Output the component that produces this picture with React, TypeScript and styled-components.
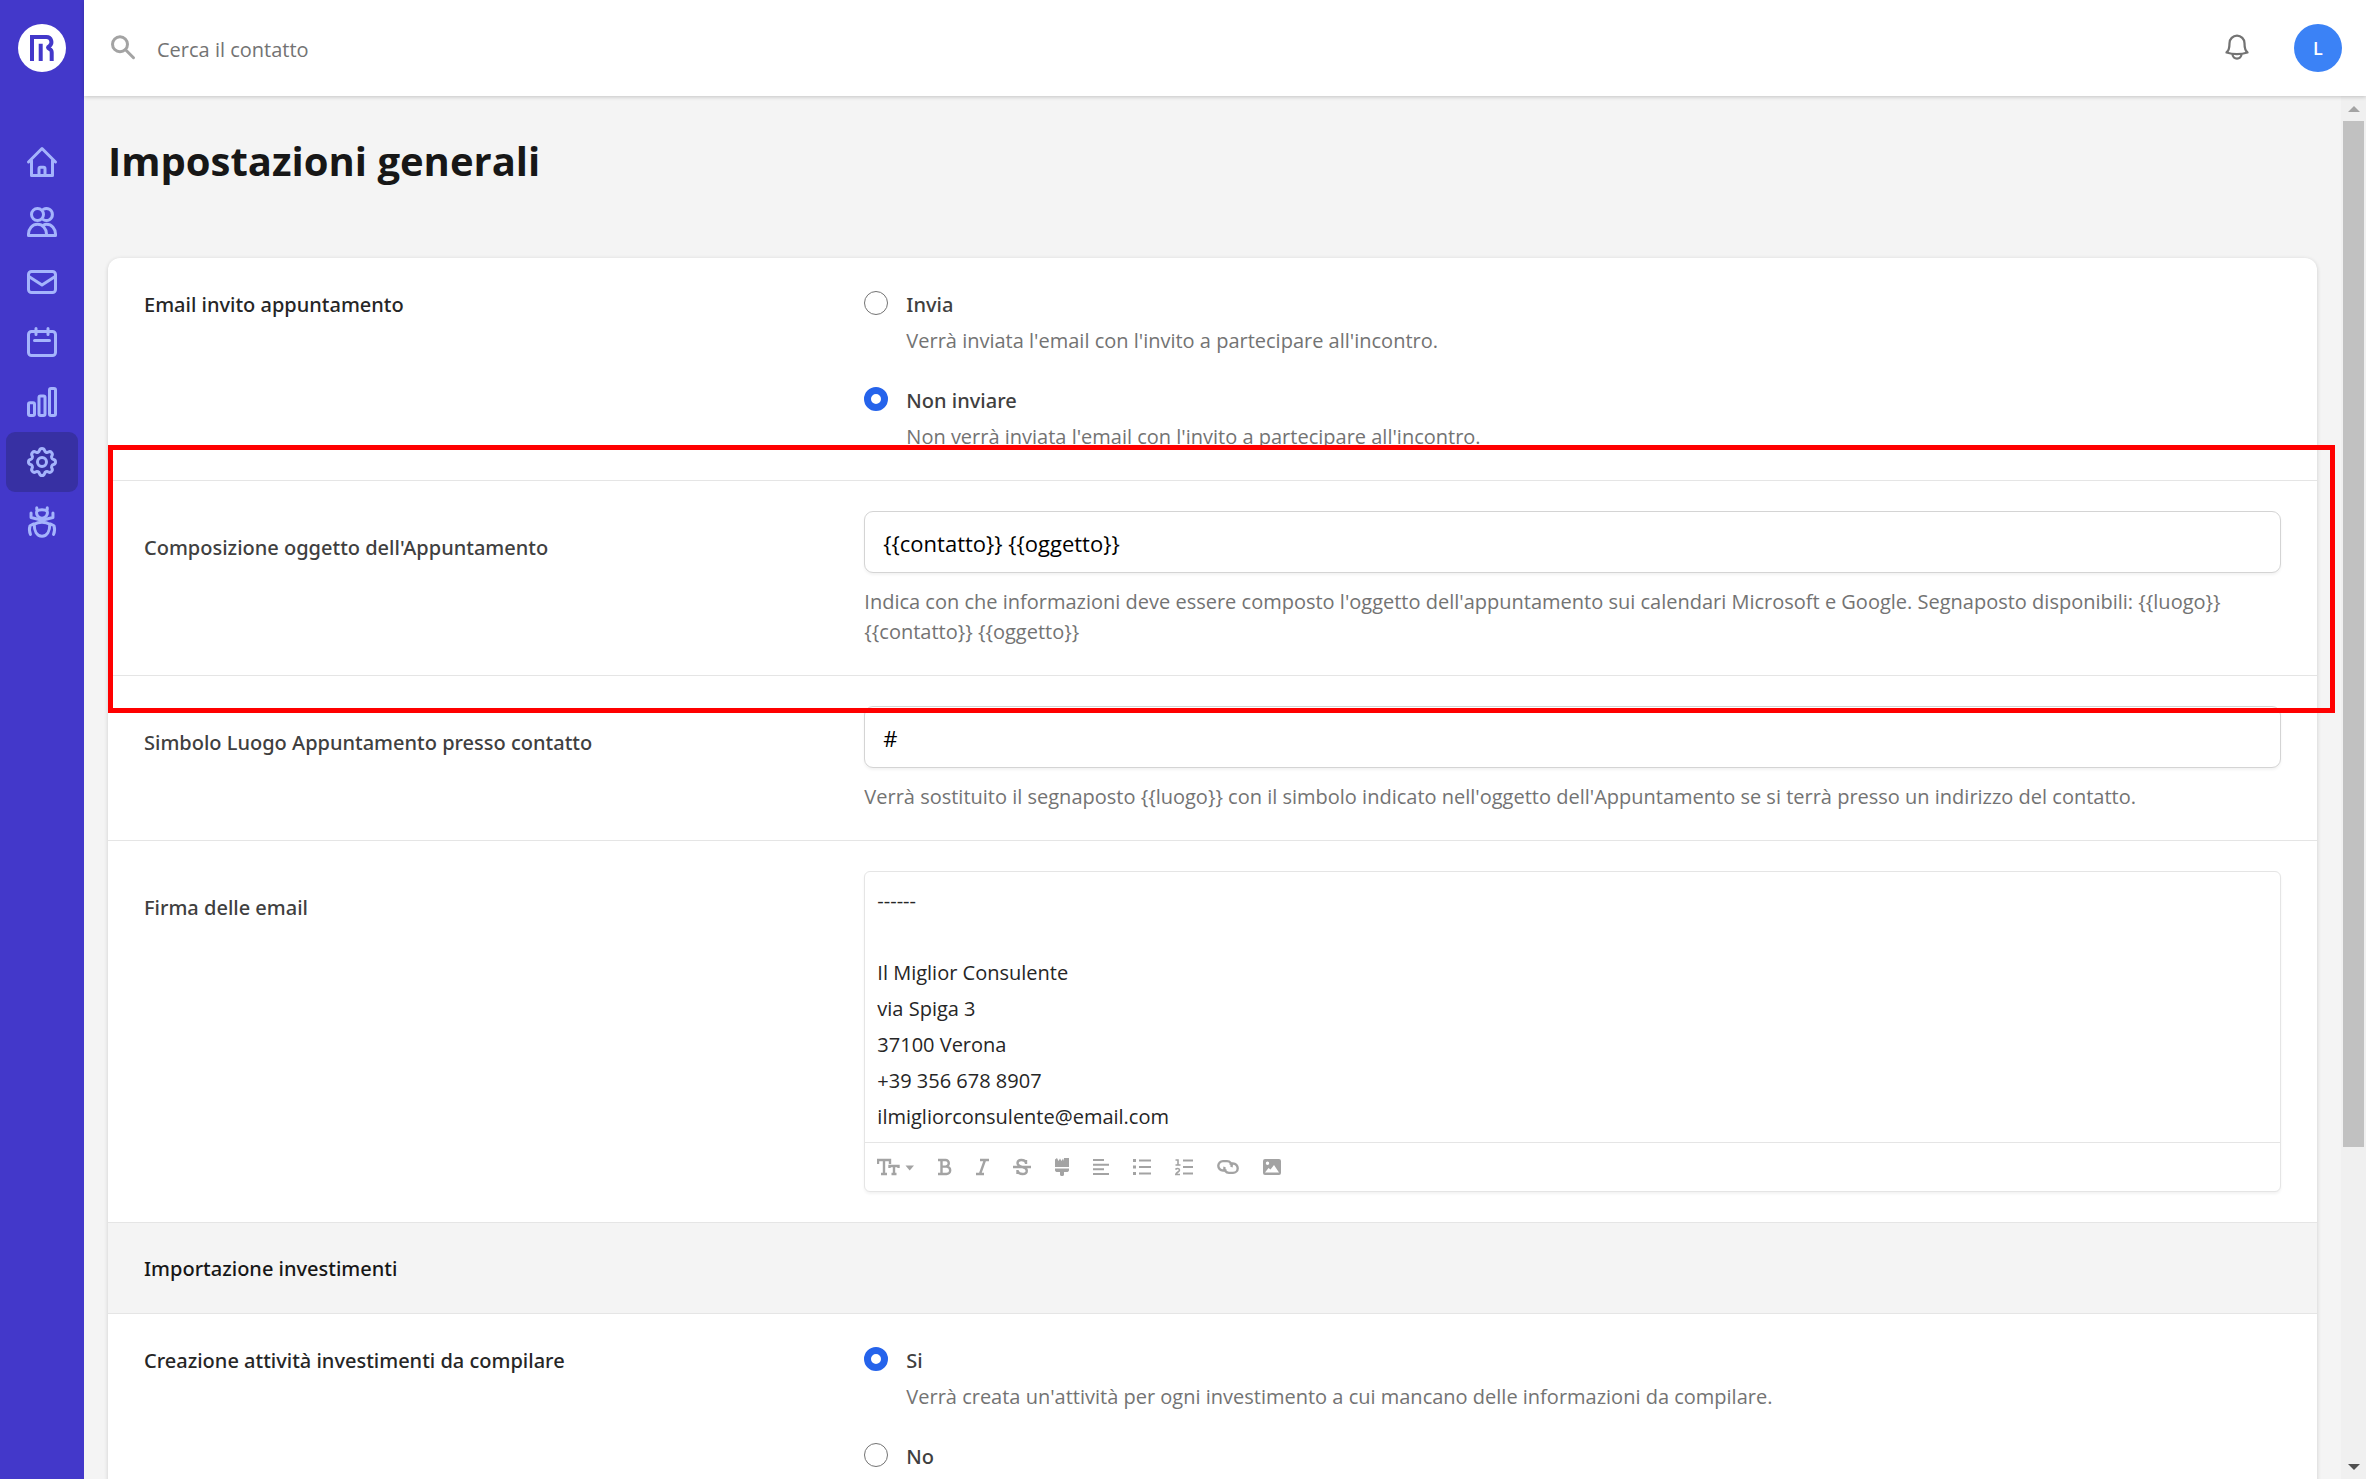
import React from 'react';
import styled, { createGlobalStyle, css } from 'styled-components';

const GlobalStyle = createGlobalStyle`
  *, *::before, *::after { box-sizing: border-box; }
  html, body { margin: 0; height: 100%; }
  body {
    font-family: 'Open Sans', 'Noto Sans', sans-serif;
    font-size: 20px;
    line-height: 30px;
    color: #404040;
    background: #f4f4f4;
    overflow: hidden;
  }
  button, input, textarea { font: inherit; color: inherit; }
`;

const Shell = styled.div`
  display: grid;
  grid-template-columns: 84px minmax(0, 1fr);
  grid-template-rows: minmax(0, 1fr);
  height: 100vh;
`;

const Sidebar = styled.aside`
  display: flex;
  flex-direction: column;
  align-items: center;
  padding: 24px 6px;
  gap: 60px;
  background: #4338ca;
`;

const Logo = styled.a`
  display: block;
  width: 48px;
  height: 48px;
  svg { display: block; }
`;

const Nav = styled.nav`
  display: flex;
  flex-direction: column;
  width: 100%;
`;

const NavLink = styled.a<{ $active?: boolean }>`
  display: grid;
  place-items: center;
  height: 60px;
  border-radius: 9px;
  color: #a5b4fc;
  background: ${(p) => (p.$active ? '#3730a3' : 'transparent')};
`;

const Column = styled.div`
  display: grid;
  grid-template-rows: 96px minmax(0, 1fr);
`;

const TopBar = styled.header`
  z-index: 1;
  display: flex;
  align-items: center;
  gap: 39px;
  padding: 0 24px;
  background: #fff;
  box-shadow: 0 1px 4px rgba(0, 0, 0, 0.2);
`;

const Search = styled.label`
  flex: 1;
  display: flex;
  align-items: center;
  gap: 19px;
  color: #a3a3a3;
`;

const SearchInput = styled.input`
  flex: 1;
  height: 48px;
  padding: 2px 0 0;
  border: 0;
  outline: 0;
  background: none;
  &::placeholder { color: #737373; opacity: 1; }
`;

const IconButton = styled.button`
  display: grid;
  place-items: center;
  width: 36px;
  height: 36px;
  padding: 0;
  border: 0;
  background: none;
  color: #737373;
`;

const Avatar = styled.button`
  width: 48px;
  height: 48px;
  padding: 0;
  border: 0;
  border-radius: 50%;
  background: #3b82f6;
  color: #fff;
  font-size: 18px;
  font-weight: 600;
`;

const Viewport = styled.div`
  display: grid;
  grid-template-columns: minmax(0, 1fr) 25px;
  grid-template-rows: minmax(0, 1fr);
  overflow: hidden;
`;

const Main = styled.main`
  padding: 36px 24px;
  overflow: hidden;
`;

const Title = styled.h1`
  margin: 0 0 68px;
  font-size: 40px;
  line-height: 58px;
  font-weight: 700;
  color: #171717;
`;

const Card = styled.form`
  border-radius: 12px;
  background: #fff;
  box-shadow: 0 1px 4px rgba(0, 0, 0, 0.16);
`;

const Row = styled.section<{ $divided?: boolean }>`
  position: relative;
  display: grid;
  grid-template-columns: repeat(3, minmax(0, 1fr));
  column-gap: 24px;
  padding: 30px 36px;
  ${(p) => p.$divided && css`border-top: 1px solid #e5e5e5;`}
  & > :nth-child(2) { grid-column: span 2; }
`;

const RadioRow = styled(Row)`
  padding-top: 29px;
  padding-bottom: 25px;
`;

const TextRow = styled(Row)`
  padding-bottom: 28px;
`;

const fieldName = css`
  font-family: 'Noto Sans', 'Open Sans', sans-serif;
  font-weight: 500;
  color: #404040;
`;

const FieldLabel = styled.label`
  ${fieldName}
  padding-top: 22px;
`;

const GroupLabel = styled.div`
  ${fieldName}
  line-height: 36px;
  color: #262626;
`;

const Field = styled.div`
  display: flex;
  flex-direction: column;
  gap: 14px;
  min-width: 0;
`;

const TextInput = styled.input`
  width: 100%;
  height: 62px;
  padding: 2px 18px 0;
  border: 1px solid #d4d4d4;
  border-radius: 9px;
  background: #fff;
  color: #000;
  font-size: 22px;
  box-shadow: 0 2px 3px rgba(0, 0, 0, 0.05);
`;

const Help = styled.p`
  margin: 0;
  color: #737373;
`;

const Options = styled.div`
  display: flex;
  flex-direction: column;
  gap: 24px;
`;

const Option = styled.div`
  display: grid;
  grid-template-columns: 24px minmax(0, 1fr);
  column-gap: 18px;
  line-height: 36px;
`;

const Radio = styled.input`
  appearance: none;
  width: 24px;
  height: 24px;
  margin: 4px 0 0;
  border: 1px solid #737373;
  border-radius: 50%;
  background: #fff;
  &:checked { border: 7px solid #2563eb; }
`;

const OptionName = styled.label`
  ${fieldName}
`;

const OptionHelp = styled(Help)`
  grid-column: 2;
`;

const SectionHead = styled.h2`
  ${fieldName}
  margin: 0;
  padding: 31px 36px 29px;
  border-top: 1px solid #e5e5e5;
  background: #f4f4f4;
  color: #171717;
  font-size: 20px;
`;

const Highlight = styled.div`
  position: absolute;
  inset: -36px -18px -38px 0;
  z-index: 2;
  border: 5px solid #ff0000;
  pointer-events: none;
`;

const Editor = styled.div`
  border: 1px solid #e5e5e5;
  border-radius: 6px;
  background: #fff;
  box-shadow: 0 2px 3px rgba(0, 0, 0, 0.05);
`;

const EditorText = styled.textarea`
  display: block;
  width: 100%;
  height: 270px;
  padding: 11px 12px 7px;
  border: 0;
  outline: 0;
  resize: none;
  overflow: hidden;
  background: none;
  color: #262626;
  line-height: 36px;
`;

const Toolbar = styled.div`
  display: flex;
  align-items: center;
  gap: 24px;
  height: 49px;
  padding: 0 12px;
  border-top: 1px solid #e5e5e5;
`;

const Tool = styled.button`
  display: block;
  padding: 0;
  border: 0;
  background: none;
  color: #a3a3a3;
  svg { display: block; }
`;

const ScrollTrack = styled.div`
  display: flex;
  flex-direction: column;
  align-items: center;
  background: #f0f0f0;
`;

const ScrollArrow = styled.div<{ $down?: boolean }>`
  display: grid;
  place-items: center;
  height: 25px;
  &::before {
    content: '';
    border: 6px solid transparent;
    ${(p) => p.$down
      ? css`border-top-color: #505050; border-bottom: 0;`
      : css`border-bottom-color: #a3a3a3; border-top: 0;`}
  }
`;

const ScrollRail = styled.div`
  flex: 1;
  width: 21px;
`;

const ScrollThumb = styled.div`
  height: 77%;
  background: #c1c1c1;
`;

type IconProps = { children: React.ReactNode; w?: number; h?: number; box?: string; stroke?: number };

const Line = ({ children, w = 36, h = 36, box = '0 0 24 24', stroke = 2 }: IconProps) => (
  <svg width={w} height={h} viewBox={box} fill="none" stroke="currentColor" strokeWidth={stroke}
    strokeLinecap="round" strokeLinejoin="round" aria-hidden="true">{children}</svg>
);

const navItems = [
  { name: 'Home', icon: <><path d="M3 12 12 3l9 9" /><path d="M5 11v10h14V11" /><path d="M10 21v-4.500a1 1 0 0 1 1-1h2a1 1 0 0 1 1 1V21" /></> },
  { name: 'Contatti', icon: <><circle cx="9" cy="7" r="4" /><path d="M13 3.500a4 4 0 1 1 0 7" /><path d="M3 21v-1c0-3.500 2.500-6.500 6-6.500s6 3 6 6.500v1z" /><path d="M13 14c.6-.3 1.200-.5 2-.5 3.500 0 6 3 6 6.500v1h-6" /></> },
  { name: 'Email', icon: <><rect x="3" y="5" width="18" height="14" rx="2" /><path d="m3.500 8.500 8.500 5.500 8.500-5.500" /></> },
  { name: 'Calendario', icon: <><rect x="3" y="5" width="18" height="16" rx="2" /><path d="M8 3v4M16 3v4M7 11h10" /></> },
  { name: 'Statistiche', icon: <><rect x="3" y="12.500" width="4" height="8.500" rx="1" /><rect x="10" y="8" width="4" height="13" rx="1" /><rect x="17" y="3" width="4" height="18" rx="1" /></> },
  { name: 'Impostazioni', active: true, icon: <><path d="M10.325 4.317c.426-1.756 2.924-1.756 3.350 0a1.724 1.724 0 0 0 2.573 1.066c1.543-.94 3.310.826 2.370 2.370a1.724 1.724 0 0 0 1.065 2.572c1.756.426 1.756 2.924 0 3.350a1.724 1.724 0 0 0-1.066 2.573c.94 1.543-.826 3.310-2.370 2.370a1.724 1.724 0 0 0-2.572 1.065c-.426 1.756-2.924 1.756-3.350 0a1.724 1.724 0 0 0-2.573-1.066c-1.543.94-3.310-.826-2.370-2.370a1.724 1.724 0 0 0-1.065-2.572c-1.756-.426-1.756-2.924 0-3.350a1.724 1.724 0 0 0 1.066-2.573c-.94-1.543.826-3.310 2.370-2.370.996.608 2.296.070 2.572-1.065z" /><circle cx="12" cy="12" r="3" /></> },
  { name: 'Segnala un bug', icon: <><path d="M8.500 2.500v1.200M15.500 2.500v1.200M8.500 5a3.600 3.600 0 1 0 7 0c-1-1.500-6-1.500-7 0z" /><circle cx="12" cy="10.700" r="1" /><path d="M4.700 6v3l6 1.500M19.300 6v3l-6 1.500" /><path d="M6.800 13.500c3-1.700 7.400-1.700 10.400 0 0 4.500-1.700 8-5.200 8s-5.200-3.500-5.200-8z" /><path d="M6.500 13.300 4 14.500c-.6 2-.5 4 .3 5.800M17.500 13.300l2.500 1.200c.6 2 .5 4-.3 5.800" /></> },
];

const Glyph = ({ children, w, stroke = 2 }: IconProps) => (
  <svg width={w} height="18" viewBox={`0 0 ${w} 18`} fill="none" stroke="currentColor" strokeWidth={stroke} aria-hidden="true">
    {children}
  </svg>
);

const toolItems = [
  { name: 'Dimensione testo', icon: <Glyph w={37} stroke={2.4}><path d="M1 6V2h12v4M7 2v14M4 16h6" /><path d="M12.500 10V8h9v2M17 8v8M14.500 16h5" /><path d="M28.500 7.500H37L32.700 12.500z" fill="currentColor" stroke="none" /></Glyph> },
  { name: 'Grassetto', icon: <Glyph w={14} stroke={2.4}><path d="M0 2h7.500a3.300 3.300 0 0 1 0 6.600H3M7.500 8.600h1a3.700 3.700 0 0 1 0 7.400H0M3.500 2v14" /></Glyph> },
  { name: 'Corsivo', icon: <Glyph w={13} stroke={2.4}><path d="M4 2h9M0 16h8M9 2 4 16" /></Glyph> },
  { name: 'Barrato', icon: <Glyph w={18} stroke={2.4}><path d="M0 9h18M13 6V2M13 4.500C11.500 1 4.500 1 4.500 5c0 2.500 2.500 3.200 5 4 2.500.7 4.300 1.500 4.300 3.700 0 4.300-7.800 4.300-9.300.3M4.500 12v4" /></Glyph> },
  { name: 'Colore', icon: <Glyph w={14}><path d="M0 1.500 2 0l1.500 3L5 .5 6.500 3 8 .5 9 3V0h5v9H0zM0 10.500h14V12c0 1.500-1 2-2.500 2H9v2.500c0 2-4 2-4 0V14H2.500C1 14 0 13.500 0 12z" fill="currentColor" stroke="none" /></Glyph> },
  { name: 'Allineamento', icon: <Glyph w={16}><path d="M0 2h11M0 6.700h16M0 11.300h11M0 16h16" /></Glyph> },
  { name: 'Elenco puntato', icon: <Glyph w={18}><path d="M6 2.500h12M6 9h12M6 15.500h12" /><path d="M0 2.500h3M0 9h3M0 15.500h3" strokeWidth="3" /></Glyph> },
  { name: 'Elenco numerato', icon: <Glyph w={18}><path d="M8 2.500h10M8 9h10M8 15.500h10" /><path d="M.5 2H3v5M.5 7h5M.5 11.500c1-1.500 4-1.500 4 .5S.8 14.500.8 16.500H5" strokeWidth="1.600" /></Glyph> },
  { name: 'Collegamento', icon: <Glyph w={22} stroke={2.4}><path d="M9.500 12.500H6a4.700 4.700 0 0 1 0-9.400h4a4.700 4.700 0 0 1 4.500 6M12.500 5.500H16a4.700 4.700 0 0 1 0 9.400h-4a4.700 4.700 0 0 1-4.500-6" /></Glyph> },
  { name: 'Immagine', icon: <Glyph w={18}><path fillRule="evenodd" d="M2 1h14a2 2 0 0 1 2 2v12a2 2 0 0 1-2 2H2a2 2 0 0 1-2-2V3a2 2 0 0 1 2-2zm2.500 2.500a1.700 1.700 0 1 0 0 3.400 1.700 1.700 0 0 0 0-3.400zM2 14.500h14L11 7l-3.500 4.500L5.500 10z" fill="currentColor" stroke="none" /></Glyph> },
];

export default function App() {
  return (
    <>
      <GlobalStyle />
      <Shell>
        <Sidebar>
          <Logo href="#" aria-label="Home">
            <svg width="48" height="48" viewBox="0 0 48 48" aria-hidden="true">
              <circle cx="24" cy="24" r="24" fill="#fff" />
              <path d="M14 37V13h14.500c5 0 6.500 6.500 3 9-2 1-2 2 0 3 1.500.6 2.200 1.500 2.200 3.500V37M22.700 37V19.700" fill="none" stroke="#4338ca" strokeWidth="4" />
            </svg>
          </Logo>
          <Nav>
            {navItems.map((item) => (
              <NavLink key={item.name} href="#" aria-label={item.name} $active={item.active}>
                <Line>{item.icon}</Line>
              </NavLink>
            ))}
          </Nav>
        </Sidebar>
        <Column>
          <TopBar>
            <Search>
              <Line w={30} h={30} box="0 0 20 20"><circle cx="8" cy="7.500" r="5" /><path d="m11.700 11.200 5.300 5.300" /></Line>
              <SearchInput type="search" aria-label="Cerca il contatto" placeholder="Cerca il contatto" />
            </Search>
            <IconButton type="button" aria-label="Notifiche">
              <Line stroke={1.5}><path d="M5 15c1.500-1.200 2-3 2-6.200a5 5 0 0 1 10 0c0 3.200.5 5 2 6.200-4 1.200-10 1.200-14 0zM9 16c0 4 6 4 6 0" /></Line>
            </IconButton>
            <Avatar type="button">L</Avatar>
          </TopBar>
          <Viewport>
            <Main>
              <Title>Impostazioni generali</Title>
              <Card>
                <RadioRow role="radiogroup" aria-labelledby="invite">
                  <GroupLabel id="invite">Email invito appuntamento</GroupLabel>
                  <Options>
                    <Option>
                      <Radio type="radio" name="invite" id="send" />
                      <OptionName htmlFor="send">Invia</OptionName>
                      <OptionHelp>Verrà inviata l'email con l'invito a partecipare all'incontro.</OptionHelp>
                    </Option>
                    <Option>
                      <Radio type="radio" name="invite" id="nosend" defaultChecked />
                      <OptionName htmlFor="nosend">Non inviare</OptionName>
                      <OptionHelp>Non verrà inviata l'email con l'invito a partecipare all'incontro.</OptionHelp>
                    </Option>
                  </Options>
                </RadioRow>
                <TextRow $divided>
                  <FieldLabel htmlFor="subject">Composizione oggetto dell'Appuntamento</FieldLabel>
                  <Field>
                    <TextInput id="subject" defaultValue="{{contatto}} {{oggetto}}" />
                    <Help>{"Indica con che informazioni deve essere composto l'oggetto dell'appuntamento sui calendari Microsoft e Google. Segnaposto disponibili: {{luogo}} {{contatto}} {{oggetto}}"}</Help>
                  </Field>
                  <Highlight />
                </TextRow>
                <TextRow $divided>
                  <FieldLabel htmlFor="symbol">Simbolo Luogo Appuntamento presso contatto</FieldLabel>
                  <Field>
                    <TextInput id="symbol" defaultValue="#" />
                    <Help>{"Verrà sostituito il segnaposto {{luogo}} con il simbolo indicato nell'oggetto dell'Appuntamento se si terrà presso un indirizzo del contatto."}</Help>
                  </Field>
                </TextRow>
                <Row $divided>
                  <FieldLabel htmlFor="signature">Firma delle email</FieldLabel>
                  <Editor>
                    <EditorText id="signature" spellCheck={false} defaultValue={'------\n\nIl Miglior Consulente\nvia Spiga 3\n37100 Verona\n+39 356 678 8907\nilmigliorconsulente@email.com'} />
                    <Toolbar>
                      {toolItems.map((t) => <Tool key={t.name} type="button" aria-label={t.name}>{t.icon}</Tool>)}
                    </Toolbar>
                  </Editor>
                </Row>
                <SectionHead>Importazione investimenti</SectionHead>
                <RadioRow $divided role="radiogroup" aria-labelledby="tasks">
                  <GroupLabel id="tasks">Creazione attività investimenti da compilare</GroupLabel>
                  <Options>
                    <Option>
                      <Radio type="radio" name="tasks" id="yes" defaultChecked />
                      <OptionName htmlFor="yes">Si</OptionName>
                      <OptionHelp>Verrà creata un'attività per ogni investimento a cui mancano delle informazioni da compilare.</OptionHelp>
                    </Option>
                    <Option>
                      <Radio type="radio" name="tasks" id="no" />
                      <OptionName htmlFor="no">No</OptionName>
                    </Option>
                  </Options>
                </RadioRow>
              </Card>
            </Main>
            <ScrollTrack aria-hidden="true">
              <ScrollArrow />
              <ScrollRail><ScrollThumb /></ScrollRail>
              <ScrollArrow $down />
            </ScrollTrack>
          </Viewport>
        </Column>
      </Shell>
    </>
  );
}
